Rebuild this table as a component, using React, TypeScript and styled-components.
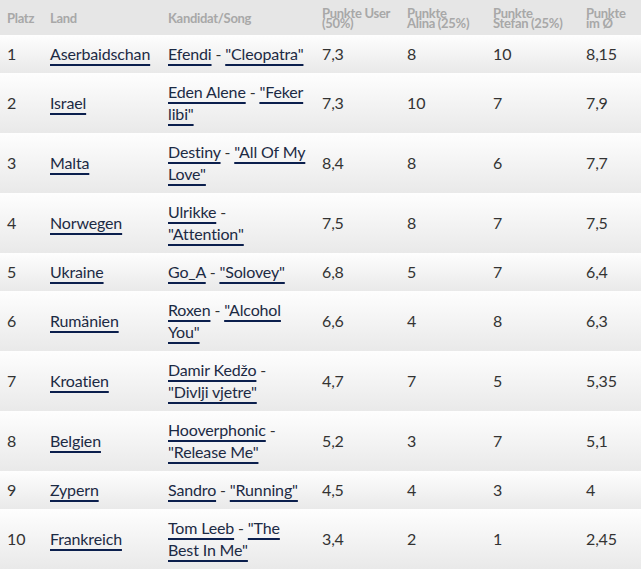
import React from 'react';
import styled, { createGlobalStyle } from 'styled-components';

type Entry = {
  rank: number;
  country: string;
  artist: string;
  song: string;
  user: string;
  alina: string;
  stefan: string;
  avg: string;
  breakSong?: boolean;
};

const entries: Entry[] = [
  { rank: 1, country: 'Aserbaidschan', artist: 'Efendi', song: '"Cleopatra"', user: '7,3', alina: '8', stefan: '10', avg: '8,15' },
  { rank: 2, country: 'Israel', artist: 'Eden Alene', song: '"Feker libi"', user: '7,3', alina: '10', stefan: '7', avg: '7,9' },
  { rank: 3, country: 'Malta', artist: 'Destiny', song: '"All Of My Love"', user: '8,4', alina: '8', stefan: '6', avg: '7,7' },
  { rank: 4, country: 'Norwegen', artist: 'Ulrikke', song: '"Attention"', user: '7,5', alina: '8', stefan: '7', avg: '7,5', breakSong: true },
  { rank: 5, country: 'Ukraine', artist: 'Go_A', song: '"Solovey"', user: '6,8', alina: '5', stefan: '7', avg: '6,4' },
  { rank: 6, country: 'Rumänien', artist: 'Roxen', song: '"Alcohol You"', user: '6,6', alina: '4', stefan: '8', avg: '6,3' },
  { rank: 7, country: 'Kroatien', artist: 'Damir Kedžo', song: '"Divlji vjetre"', user: '4,7', alina: '7', stefan: '5', avg: '5,35', breakSong: true },
  { rank: 8, country: 'Belgien', artist: 'Hooverphonic', song: '"Release Me"', user: '5,2', alina: '3', stefan: '7', avg: '5,1', breakSong: true },
  { rank: 9, country: 'Zypern', artist: 'Sandro', song: '"Running"', user: '4,5', alina: '4', stefan: '3', avg: '4' },
  { rank: 10, country: 'Frankreich', artist: 'Tom Leeb', song: '"The Best In Me"', user: '3,4', alina: '2', stefan: '1', avg: '2,45' },
];

const columns = [
  { label: ['Platz'], width: 43 },
  { label: ['Land'], width: 118 },
  { label: ['Kandidat/Song'], width: 154 },
  { label: ['Punkte User', '(50%)'], width: 85 },
  { label: ['Punkte', 'Alina (25%)'], width: 86 },
  { label: ['Punkte', 'Stefan (25%)'], width: 93 },
  { label: ['Punkte', 'im Ø'], width: 62 },
];

const GlobalStyle = createGlobalStyle`
  html, body {
    margin: 0;
    padding: 0;
    background: #fff;
  }
  body {
    font-family: Lato, 'Open Sans', 'Liberation Sans', sans-serif;
  }
`;

const Table = styled.table`
  width: 641px;
  border-collapse: collapse;
  table-layout: fixed;
`;

const HeadCell = styled.th`
  background: #e6e6e6;
  color: #a8a8a8;
  font-size: 13px;
  font-weight: 700;
  line-height: 10px;
  letter-spacing: -0.3px;
  text-align: left;
  vertical-align: middle;
  white-space: nowrap;
  height: 35px;
  padding: 0 4px 0 7px;
  box-sizing: border-box;
`;

const HeadLine = styled.span`
  display: block;
`;

const Row = styled.tr`
  background: linear-gradient(#fefefe, #e9e9e9);
`;

const Cell = styled.td`
  font-size: 16px;
  line-height: 22px;
  letter-spacing: -0.15px;
  color: #333;
  padding: 8px 5px 8px 7px;
  vertical-align: middle;
`;

const Link = styled.a`
  color: #1c2a44;
  text-decoration: underline;
  text-decoration-color: #0b1f4d;
  text-decoration-thickness: 2px;
  text-underline-offset: 4px;
  cursor: pointer;
`;

const App: React.FC = () => (
  <>
    <GlobalStyle />
    <Table>
      <colgroup>
        {columns.map((c) => (
          <col key={c.label.join(' ')} style={{ width: c.width }} />
        ))}
      </colgroup>
      <thead>
        <tr>
          {columns.map((c) => (
            <HeadCell key={c.label.join(' ')}>
              {c.label.map((line) => (
                <HeadLine key={line}>{line}</HeadLine>
              ))}
            </HeadCell>
          ))}
        </tr>
      </thead>
      <tbody>
        {entries.map((e) => (
          <Row key={e.rank}>
            <Cell>{e.rank}</Cell>
            <Cell>
              <Link>{e.country}</Link>
            </Cell>
            <Cell>
              <Link>{e.artist}</Link> -{e.breakSong ? <br /> : ' '}
              <Link>{e.song}</Link>
            </Cell>
            <Cell>{e.user}</Cell>
            <Cell>{e.alina}</Cell>
            <Cell>{e.stefan}</Cell>
            <Cell>{e.avg}</Cell>
          </Row>
        ))}
      </tbody>
    </Table>
  </>
);

export default App;
